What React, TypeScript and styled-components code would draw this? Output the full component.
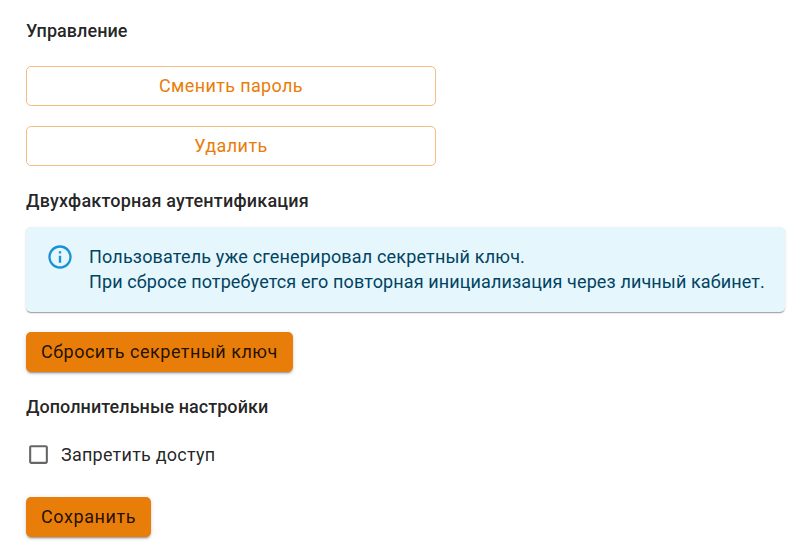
import React from 'react';
import styled, { createGlobalStyle, css } from 'styled-components';

const GlobalStyle = createGlobalStyle`
  *, *::before, *::after { box-sizing: border-box; }
  body {
    margin: 0;
    background: #fff;
    color: rgba(0, 0, 0, 0.87);
    font-family: Roboto, "Liberation Sans", sans-serif;
  }
`;

const Page = styled.main`
  display: flex;
  flex-direction: column;
  align-items: flex-start;
  height: 552px;
  padding: 16px 22px 0 26px;
`;

const Heading = styled.h2<{ $top?: number; $tracking: number }>`
  margin: ${({ $top = 0 }) => $top}px 0 0;
  font-size: 18px;
  font-weight: 500;
  line-height: 30px;
  letter-spacing: ${({ $tracking }) => $tracking}px;
`;

const Actions = styled.div`
  display: flex;
  flex-direction: column;
  gap: 20px;
  width: 410px;
  margin-top: 20px;
`;

const Button = styled.button<{
  $variant: 'outlined' | 'contained';
  $top?: number;
  $tracking?: number;
}>`
  height: 40px;
  margin: ${({ $top = 0 }) => $top}px 0 0;
  padding: 0 15px;
  border: 0;
  border-radius: 5px;
  font-family: inherit;
  font-size: 18px;
  font-weight: 400;
  line-height: 30px;
  letter-spacing: ${({ $tracking = 0.5 }) => $tracking}px;
  white-space: nowrap;
  cursor: pointer;
  ${({ $variant }) =>
    $variant === 'outlined'
      ? css`
          color: #e87d09;
          background: transparent;
          border: 1px solid rgba(232, 125, 9, 0.5);
        `
      : css`
          color: rgba(0, 0, 0, 0.87);
          background: #e87d09;
          box-shadow: 0 3px 1px -2px rgba(0, 0, 0, 0.2), 0 2px 2px 0 rgba(0, 0, 0, 0.14),
            0 1px 5px 0 rgba(0, 0, 0, 0.12);
        `}
`;

const Alert = styled.div`
  display: flex;
  width: 759px;
  height: 85px;
  margin-top: 11px;
  padding: 17px 20px;
  border-radius: 5px;
  color: #014361;
  background: #e5f6fd;
  box-shadow: 0 2px 1px -1px rgba(0, 0, 0, 0.2), 0 1px 1px 0 rgba(0, 0, 0, 0.14),
    0 1px 3px 0 rgba(0, 0, 0, 0.12);
`;

const AlertIcon = styled.svg`
  flex: none;
  width: 28px;
  height: 28px;
  margin: -1px 15px 0 0;
  fill: #0288d1;
  opacity: 0.9;
`;

const AlertText = styled.div`
  font-size: 18px;
  line-height: 25px;
  white-space: nowrap;
`;

const AlertLine = styled.div<{ $tracking: number }>`
  letter-spacing: ${({ $tracking }) => $tracking}px;
`;

const CheckLabel = styled.label`
  display: flex;
  align-items: center;
  gap: 10px;
  height: 30px;
  margin-top: 17px;
  font-size: 18px;
  letter-spacing: 0.24px;
`;

const CheckIcon = styled.svg`
  width: 25px;
  height: 25px;
  fill: rgba(0, 0, 0, 0.6);
`;

export default function App() {
  return (
    <>
      <GlobalStyle />
      <Page>
        <Heading $tracking={0.05}>Управление</Heading>
        <Actions>
          <Button $variant="outlined" $tracking={0.37}>Сменить пароль</Button>
          <Button $variant="outlined" $tracking={0.4}>Удалить</Button>
        </Actions>
        <Heading $top={20} $tracking={0.2}>Двухфакторная аутентификация</Heading>
        <Alert role="alert">
          <AlertIcon viewBox="0 0 24 24">
            <path d="M11 7h2v2h-2zm0 4h2v6h-2zm1-9C6.48 2 2 6.48 2 12s4.48 10 10 10 10-4.48 10-10S17.52 2 12 2m0 18c-4.41 0-8-3.59-8-8s3.59-8 8-8 8 3.59 8 8-3.59 8-8 8" />
          </AlertIcon>
          <AlertText>
            <AlertLine $tracking={0.17}>Пользователь уже сгенерировал секретный ключ.</AlertLine>
            <AlertLine $tracking={0.12}>
              При сбросе потребуется его повторная инициализация через личный кабинет.
            </AlertLine>
          </AlertText>
        </Alert>
        <Button $variant="contained" $top={20}>Сбросить секретный ключ</Button>
        <Heading $top={20} $tracking={0.05}>Дополнительные настройки</Heading>
        <CheckLabel>
          <CheckIcon viewBox="0 0 24 24">
            <path d="M19 5v14H5V5zm0-2H5c-1.100 0-2 .9-2 2v14c0 1.100.9 2 2 2h14c1.100 0 2-.9 2-2V5c0-1.100-.9-2-2-2" />
          </CheckIcon>
          Запретить доступ
        </CheckLabel>
        <Button $variant="contained" $top={28} $tracking={0.58}>Сохранить</Button>
      </Page>
    </>
  );
}
